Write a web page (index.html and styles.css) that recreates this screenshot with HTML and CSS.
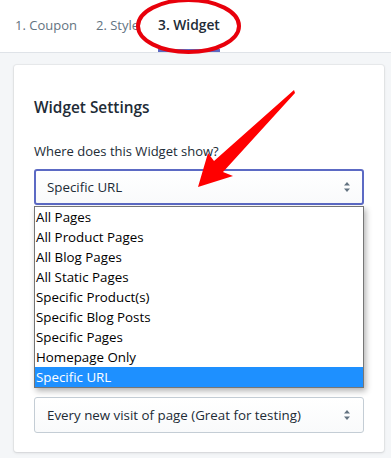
FILE: index.html
```html
<!DOCTYPE html>
<html>
<head>
<meta charset="utf-8">
<link rel="stylesheet" href="styles.css">
</head>
<body>
<header class="tabs">
  <div class="tab">1. Coupon</div>
  <div class="tab">2. Style</div>
  <div class="tab active">3. Widget</div>
</header>
<main class="page">
  <section class="card">
    <h2 class="card-title">Widget Settings</h2>
    <label class="label">Where does this Widget show?</label>
    <div class="select-wrap">
      <div class="select focused">
        <span>Specific URL</span>
        <svg class="caret" width="8" height="12" viewBox="0 0 8 12"><path d="M4 1 L7 4.5 H1 Z M4 11 L7 7.5 H1 Z" fill="#637381"/></svg>
      </div>
      <ul class="options">
        <li>All Pages</li>
        <li>All Product Pages</li>
        <li>All Blog Pages</li>
        <li>All Static Pages</li>
        <li>Specific Product(s)</li>
        <li>Specific Blog Posts</li>
        <li>Specific Pages</li>
        <li>Homepage Only</li>
        <li class="selected">Specific URL</li>
      </ul>
    </div>
    <div class="select second">
      <span>Every new visit of page (Great for testing)</span>
      <svg class="caret" width="8" height="12" viewBox="0 0 8 12"><path d="M4 1 L7 4.5 H1 Z M4 11 L7 7.5 H1 Z" fill="#637381"/></svg>
    </div>
  </section>
</main>
<svg class="annotation" width="391" height="458" viewBox="0 0 391 458">
  <ellipse cx="188.5" cy="26" rx="50.5" ry="26" fill="none" stroke="#e8000b" stroke-width="4"/>
  <polygon points="294,90 295,93 223,172 233,176 198,187 208,153 214,161" fill="#f00"/>
</svg>
</body>
</html>
```

FILE: styles.css
```css
* { box-sizing: border-box; }
html, body { margin: 0; padding: 0; }
body {
  width: 391px;
  height: 458px;
  overflow: hidden;
  background: #f4f6f8;
  font-family: "Open Sans", "Noto Sans", sans-serif;
  color: #212b36;
  position: relative;
}
.tabs {
  display: flex;
  gap: 19px;
  height: 53px;
  background: #fff;
  border-bottom: 1px solid #dfe3e8;
  padding-left: 15px;
}
.tab {
  font-size: 13px;
  line-height: 50px;
  color: #637381;
}
.tab.active {
  color: #212b36;
  font-weight: 600;
  font-size: 13.8px;
  border-bottom: 3px solid #5c6ac4;
}
.page {
  padding: 12px 7px 0 14px;
}
.card {
  background: #fff;
  border-radius: 3px;
  box-shadow: 0 0 0 1px rgba(63,63,68,0.05), 0 1px 3px 0 rgba(63,63,68,0.15);
  padding: 31px 20px 20px 20px;
  height: 387px;
}
.card-title {
  margin: 0;
  font-size: 15.4px;
  font-weight: 600;
  line-height: 24px;
}
.label {
  display: block;
  margin-top: 21px;
  font-size: 13px;
  line-height: 20px;
}
.select-wrap {
  position: relative;
  margin-top: 8px;
}
.select {
  display: flex;
  align-items: center;
  justify-content: space-between;
  height: 36px;
  padding: 0 12px;
  border: 1px solid #c4cdd5;
  border-radius: 3px;
  background: linear-gradient(#fff, #f9fafb);
  font-size: 13.33px;
  color: #212b36;
}
.select.focused {
  border: 2px solid #5c6ac4;
  padding: 0 11px;
}
.caret { display: block; }
.options {
  position: absolute;
  left: 0;
  top: 37px;
  width: 330px;
  margin: 0;
  padding: 0;
  list-style: none;
  background: #fff;
  border: 1px solid #767676;
  box-shadow: 2px 3px 6px rgba(0,0,0,0.3);
  z-index: 2;
}
.options li {
  height: 20px;
  line-height: 20px;
  font-size: 13.33px;
  color: #000;
  padding-left: 1px;
}
.options li.selected {
  background: #1e90ff;
  color: #fff;
}
.second {
  margin-top: 192px;
}
.annotation {
  position: absolute;
  left: 0;
  top: 0;
  z-index: 5;
  pointer-events: none;
}
```
